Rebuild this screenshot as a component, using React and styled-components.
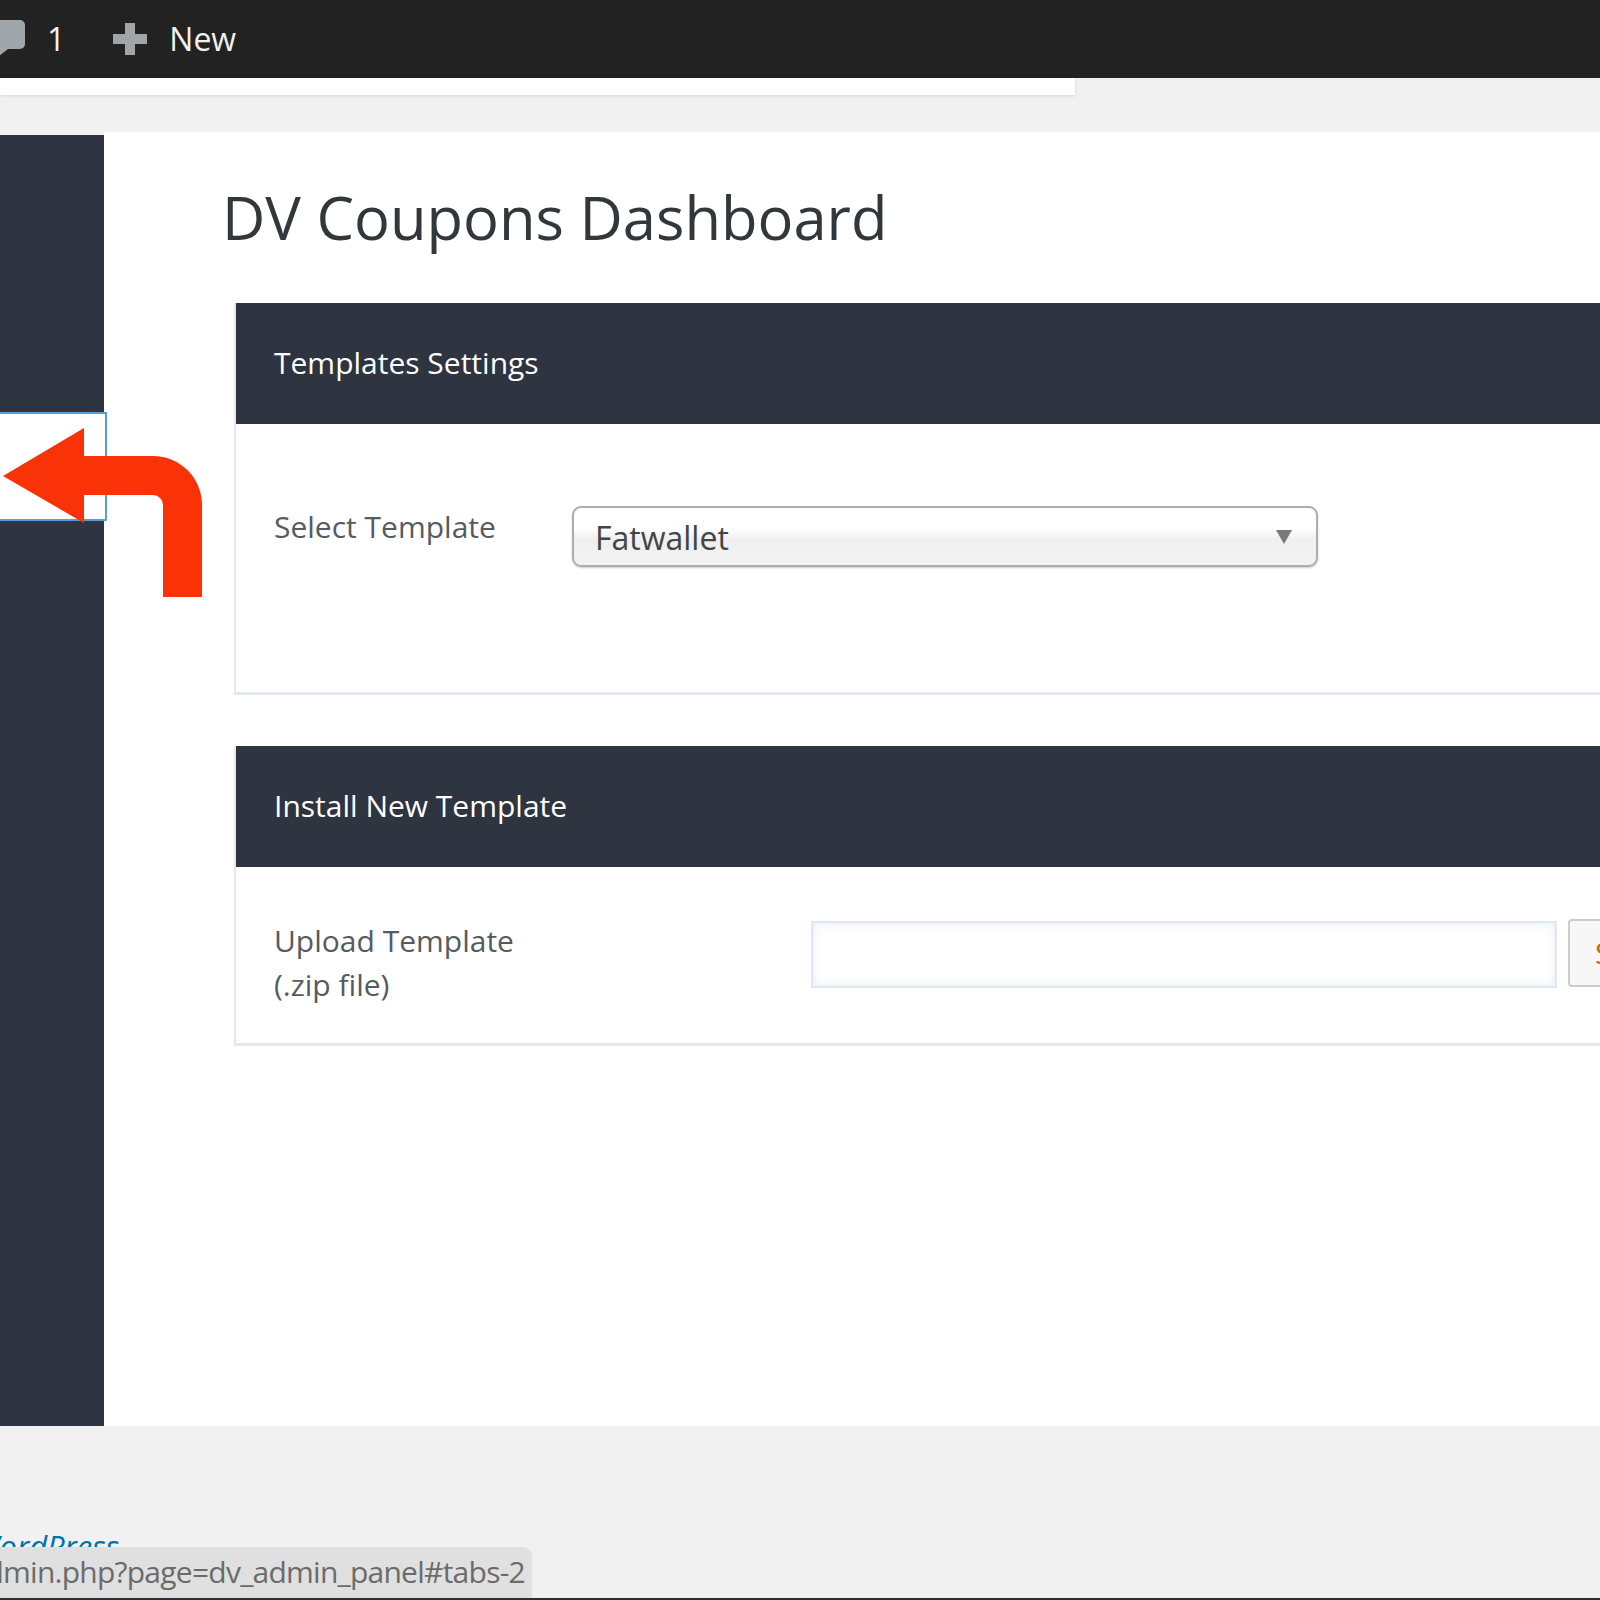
import React from "react";
import styled, { createGlobalStyle } from "styled-components";

const GlobalStyle = createGlobalStyle`
  html, body {
    margin: 0;
    padding: 0;
    background: #f1f1f1;
  }
`;

const FONT = `"Open Sans", "Noto Sans", sans-serif`;

const App = () => {
  return (
    <Page>
      <GlobalStyle />
      <TopBar>
        <BarItem $gap={18}>
          <CommentIcon />
          <BarText>1</BarText>
        </BarItem>
        <BarItem $gap={21}>
          <PlusIcon />
          <BarText>New</BarText>
        </BarItem>
      </TopBar>
      <Notice />
      <Main>
        <Sidebar>
          <ActiveItem />
        </Sidebar>
        <Content>
          <Title>DV Coupons Dashboard</Title>
          <Panel $height={392} $gap={51}>
            <PanelHeader>Templates Settings</PanelHeader>
            <SelectRow>
              <FieldLabel>Select Template</FieldLabel>
              <SelectBox>
                <span>Fatwallet</span>
                <Caret />
              </SelectBox>
            </SelectRow>
          </Panel>
          <Panel $height={300}>
            <PanelHeader>Install New Template</PanelHeader>
            <UploadRow>
              <UploadLabel>
                Upload Template
                <br />
                (.zip file)
              </UploadLabel>
              <FileInput />
              <BrowseButton>Select</BrowseButton>
            </UploadRow>
          </Panel>
        </Content>
      </Main>
      <Footer>
        <FooterText>WordPress</FooterText>
      </Footer>
      <TurnArrow />
      <StatusBubble>
        <span>wp-admin/admin.php?page=dv_admin_panel#tabs-2</span>
      </StatusBubble>
      <TaskbarEdge />
    </Page>
  );
};

export default App;

const CommentIcon = () => (
  <CommentSvg viewBox="0 0 40 42" width="40" height="42">
    <path
      d="M-6 1h37a5 5 0 0 1 5 5v19a5 5 0 0 1-5 5H19L5 41c-2 1-3 0-3-2v-9h-8z"
      fill="#a0a5aa"
    />
  </CommentSvg>
);

const PlusIcon = () => (
  <PlusSvg viewBox="0 0 36 34" width="36" height="34">
    <path d="M13 1h10v11h12v10H23v11H13V22H1V12h12z" fill="#a0a5aa" />
  </PlusSvg>
);

const Caret = () => (
  <CaretSvg viewBox="0 0 16 14" width="16" height="14">
    <path d="M0 0h16L8 14z" fill="#7a7a7a" />
  </CaretSvg>
);

const TurnArrow = () => (
  <ArrowSvg viewBox="0 0 210 180" width="210" height="180">
    <path
      d="M3 58 84 10v28h69a49 49 0 0 1 49 49v92h-39V87a10 10 0 0 0-10-10H84v28z"
      fill="#f93208"
    />
  </ArrowSvg>
);

// Styled Components
const Page = styled.div`
  position: relative;
  width: 1600px;
  height: 1600px;
  overflow: hidden;
  background: #f1f1f1;
  font-family: ${FONT};
`;

const TopBar = styled.div`
  display: flex;
  align-items: center;
  gap: 47px;
  height: 78px;
  box-sizing: border-box;
  background: #222222;
`;

const BarItem = styled.div`
  display: flex;
  align-items: center;
  gap: ${(p) => p.$gap}px;
`;

const BarText = styled.span`
  color: #f1f1f1;
  font-size: 32px;
  line-height: 40px;
`;

const CommentSvg = styled.svg`
  display: block;
  margin: 2px 0 0 -11px;
  overflow: visible;
`;

const PlusSvg = styled.svg`
  display: block;
`;

const Notice = styled.div`
  width: 1075px;
  height: 17px;
  background: #ffffff;
  box-shadow: 0 1px 3px rgba(0, 0, 0, 0.1);
`;

const Main = styled.div`
  display: flex;
  height: 1294px;
  margin-top: 37px;
`;

const Sidebar = styled.div`
  width: 104px;
  height: 1291px;
  margin-top: 3px;
  flex-shrink: 0;
  background: #2e3440;
`;

const ActiveItem = styled.div`
  width: 107px;
  height: 109px;
  margin-top: 277px;
  box-sizing: border-box;
  background: #ffffff;
  border: 2px solid #5b9dd9;
  border-left: 0;
  position: relative;
`;

const Content = styled.div`
  flex: 1;
  min-width: 0;
  background: #ffffff;
  padding-left: 118px;
`;

const Title = styled.h1`
  margin: 47px 0 0;
  height: 124px;
  color: #32373c;
  font-size: 59.7px;
  font-weight: 400;
  line-height: 76px;
`;

const Panel = styled.div`
  height: ${(p) => p.$height}px;
  margin: 0 -40px ${(p) => p.$gap || 0}px 12px;
  box-sizing: border-box;
  background: #ffffff;
  border-left: 2px solid #e1e8ef;
  border-bottom: 3px solid #e1e8ef;
`;

const PanelHeader = styled.div`
  height: 121px;
  padding-left: 38px;
  color: #ffffff;
  background: #2e3440;
  font-size: 30px;
  line-height: 120px;
`;

const SelectRow = styled.div`
  display: flex;
  align-items: flex-start;
  padding: 82px 0 0 38px;
`;

const FieldLabel = styled.div`
  width: 298px;
  margin-top: -1px;
  color: #555b61;
  font-size: 30px;
  line-height: 44px;
  white-space: nowrap;
`;

const SelectBox = styled.div`
  display: flex;
  align-items: center;
  justify-content: space-between;
  width: 746px;
  height: 61px;
  box-sizing: border-box;
  padding: 2px 24px 0 21px;
  border: 2px solid #adadad;
  border-radius: 9px;
  color: #444444;
  background: linear-gradient(#ffffff 35%, #efefef 55%, #f3f3f3);
  box-shadow: 0 1px 2px rgba(0, 0, 0, 0.2);
  font-size: 32px;
`;

const CaretSvg = styled.svg`
  display: block;
  margin-top: -2px;
`;

const UploadRow = styled.div`
  display: flex;
  align-items: flex-start;
  padding: 54px 0 0 38px;
`;

const UploadLabel = styled.div`
  width: 537px;
  flex-shrink: 0;
  margin-top: -2px;
  color: #555b61;
  font-size: 30px;
  line-height: 44px;
`;

const FileInput = styled.div`
  width: 746px;
  height: 67px;
  flex-shrink: 0;
  box-sizing: border-box;
  background: #ffffff;
  border: 2px solid #dfe8f0;
  box-shadow: inset 0 0 8px rgba(200, 215, 228, 0.5);
`;

const BrowseButton = styled.div`
  width: 140px;
  height: 68px;
  flex-shrink: 0;
  margin: -2px 0 0 11px;
  padding-left: 25px;
  box-sizing: border-box;
  color: #d4640f;
  background: #f7f7f7;
  border: 2px solid #cccccc;
  border-radius: 4px;
  font-size: 30px;
  line-height: 64px;
`;

const Footer = styled.div`
  padding: 100px 0 0;
  margin-left: -27px;
`;

const FooterText = styled.span`
  color: #0073aa;
  font-size: 31px;
  font-style: italic;
  line-height: 40px;
`;

const ArrowSvg = styled.svg`
  position: absolute;
  left: 0;
  top: 418px;
`;

const StatusBubble = styled.div`
  position: absolute;
  left: 0;
  top: 1547px;
  display: flex;
  justify-content: flex-end;
  width: 532px;
  height: 51px;
  padding-right: 7px;
  box-sizing: border-box;
  overflow: hidden;
  white-space: nowrap;
  color: #6b6b6b;
  background: #e0e0e0;
  border-top-right-radius: 9px;
  font-size: 30px;
  line-height: 50px;
  letter-spacing: -0.75px;
`;

const TaskbarEdge = styled.div`
  position: absolute;
  left: 0;
  right: 0;
  bottom: 0;
  height: 2px;
  background: #2a2f33;
`;
